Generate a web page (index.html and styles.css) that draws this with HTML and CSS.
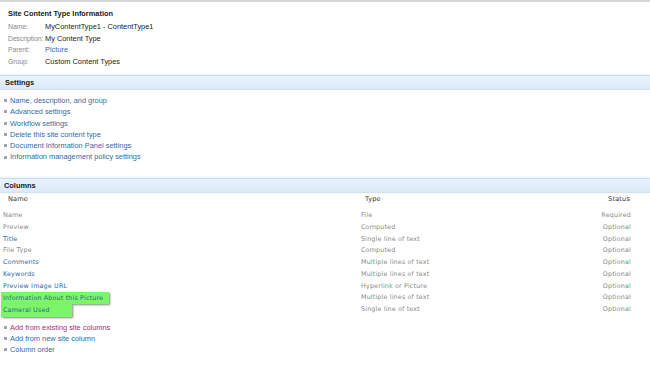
FILE: index.html
```html
<!DOCTYPE html>
<html>
<head>
<meta charset="utf-8">
<link rel="stylesheet" href="styles.css">
</head>
<body>
<div class="page">
  <section class="info">
    <div class="info-title">Site Content Type Information</div>
    <div class="info-grid">
      <div class="lbl">Name:</div><div class="val">MyContentType1 - ContentType1</div>
      <div class="lbl">Description:</div><div class="val">My Content Type</div>
      <div class="lbl">Parent:</div><div class="val"><a class="link">Picture</a></div>
      <div class="lbl">Group:</div><div class="val">Custom Content Types</div>
    </div>
  </section>

  <div class="bar">Settings</div>
  <ul class="links settings">
    <li><a class="link">Name, description, and group</a></li>
    <li><a class="link">Advanced settings</a></li>
    <li><a class="link">Workflow settings</a></li>
    <li><a class="link">Delete this site content type</a></li>
    <li><a class="link">Document Information Panel settings</a></li>
    <li><a class="link">Information management policy settings</a></li>
  </ul>

  <div class="bar bar-columns">Columns</div>
  <div class="cols">
    <div class="hdr hname">Name</div><div class="hdr htype">Type</div><div class="hdr hstatus">Status</div>

    <div class="c-name gray">Name</div><div class="c-type">File</div><div class="c-status">Required</div>
    <div class="c-name gray">Preview</div><div class="c-type">Computed</div><div class="c-status">Optional</div>
    <div class="c-name blue">Title</div><div class="c-type">Single line of text</div><div class="c-status">Optional</div>
    <div class="c-name gray">File Type</div><div class="c-type">Computed</div><div class="c-status">Optional</div>
    <div class="c-name blue">Comments</div><div class="c-type">Multiple lines of text</div><div class="c-status">Optional</div>
    <div class="c-name blue">Keywords</div><div class="c-type">Multiple lines of text</div><div class="c-status">Optional</div>
    <div class="c-name blue">Preview Image URL</div><div class="c-type">Hyperlink or Picture</div><div class="c-status">Optional</div>
    <div class="c-name blue"><span class="hl hl1">Information About this Picture</span></div><div class="c-type">Multiple lines of text</div><div class="c-status">Optional</div>
    <div class="c-name blue"><span class="hl hl2">Cameral Used</span></div><div class="c-type">Single line of text</div><div class="c-status">Optional</div>
  </div>

  <ul class="links actions">
    <li><a class="link visited">Add from existing site columns</a></li>
    <li><a class="link">Add from new site column</a></li>
    <li><a class="link">Column order</a></li>
  </ul>
</div>
</body>
</html>
```
FILE: styles.css
```css
html, body {
  margin: 0;
  padding: 0;
  background: #ffffff;
}
.page {
  width: 650px;
  height: 377px;
  border-top: 2px solid #d6d6d6;
  box-sizing: border-box;
  font-family: "Liberation Sans", Arial, sans-serif;
  font-size: 7.4px;
  color: #333;
  overflow: hidden;
}
.link {
  color: #2f6aa6;
  text-decoration: none;
}
.link.visited {
  color: #a0306e;
}
.info {
  padding: 7px 0 0 8px;
  height: 73px;
  box-sizing: border-box;
}
.info-title {
  font-weight: bold;
  color: #1a1a1a;
  line-height: 10px;
  margin-bottom: 2px;
}
.info-grid {
  display: grid;
  grid-template-columns: 37px auto;
  grid-auto-rows: 11.6px;
  line-height: 11.6px;
}
.lbl {
  color: #8a8a8a;
  white-space: nowrap;
  font-size: 6.9px;
  letter-spacing: -0.1px;
}
.val {
  color: #222;
}
.bar {
  height: 13px;
  line-height: 13px;
  padding-left: 5px;
  font-weight: bold;
  color: #1a1a1a;
  border-top: 1px solid #c9dcf1;
  border-bottom: 1px solid #d3e1ef;
  background: linear-gradient(#e9f3fe, #dce9fa);
  box-shadow: 0 -1px 2px #e4f2ff;
}
.links {
  list-style: none;
  margin: 0;
  padding: 0 0 0 4px;
}
.links li {
  line-height: 11.3px;
  height: 11.3px;
  display: flex;
  align-items: center;
  gap: 3px;
}
.links li::before {
  content: "";
  width: 3px;
  height: 3px;
  background: #9aa6b3;
}
.settings {
  padding-top: 5px;
  height: 88px;
  box-sizing: border-box;
}
.bar-columns {
  padding-left: 4px;
}
.cols {
  display: grid;
  grid-template-columns: 358px 1fr auto;
  grid-template-rows: 16px;
  grid-auto-rows: 11.75px;
  line-height: 11.75px;
  padding: 1px 19px 0 3px;
  font-family: "DejaVu Sans", sans-serif;
  font-size: 6.4px;
  letter-spacing: 0.15px;
  color: #8a8a8a;
}
.hdr {
  color: #333;
  font-size: 6.6px;
  align-self: start;
}
.hname { padding-left: 5px; }
.htype { padding-left: 4px; }
.hstatus { text-align: right; padding-right: 1px; }
.c-status { text-align: right; }
.gray { color: #8a8a8a; }
.blue { color: #2f6aa6; }
.hl {
  display: inline-block;
  background: #7df56a;
  box-shadow: 1px 1px 2px #7c8c78;
  margin-left: -2px;
  padding-left: 2px;
  line-height: 12px;
  color: #2a6a8a;
}
.hl1 { width: 106px; }
.hl2 { width: 69px; line-height: 13px; }
.actions {
  padding-top: 6px;
  padding-left: 4px;
}
```
